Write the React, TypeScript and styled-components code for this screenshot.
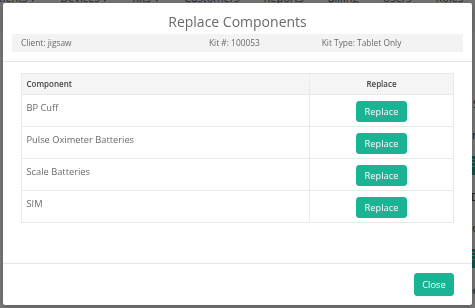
import styled, { createGlobalStyle } from 'styled-components';

const components = ['BP Cuff', 'Pulse Oximeter Batteries', 'Scale Batteries', 'SIM'];
const navItems = ['Patients ▾', 'Devices ▾', 'Kits ▾', 'Customers', 'Reports', 'Billing', 'Users', 'Roles'];
const pageRows = [
  { label: 'S', button: false },
  { label: 'n', button: false },
  { label: 'C', button: true },
  { label: 'D', button: false },
  { label: 'd', button: false },
  { label: 'U', button: true },
  { label: 'Name', button: false },
];

const GlobalStyle = createGlobalStyle`
  html, body {
    margin: 0;
    padding: 0;
    width: 475px;
    height: 308px;
    overflow: hidden;
    background: #ffffff;
    font-family: 'Open Sans', 'Liberation Sans', sans-serif;
  }
`;

function App() {
  return (
    <>
      <GlobalStyle />
      <Page>
        <Nav>
          {navItems.map((item) => (
            <NavItem key={item}>{item}</NavItem>
          ))}
        </Nav>
        <PageBody>
          {pageRows.map((row, i) => (
            <PageRow key={i}>
              {row.button ? <PageButton>Edit</PageButton> : <PageText>{row.label}</PageText>}
            </PageRow>
          ))}
        </PageBody>
      </Page>
      <Backdrop />
      <Modal>
        <Header>
          <Title>Replace Components</Title>
          <InfoBar>
            <InfoCell>Client: jigsaw</InfoCell>
            <InfoCell>Kit #: 100053</InfoCell>
            <InfoCell>Kit Type: Tablet Only</InfoCell>
          </InfoBar>
        </Header>
        <Body>
          <Table>
            <thead>
              <tr>
                <Th>Component</Th>
                <Th $center>Replace</Th>
              </tr>
            </thead>
            <tbody>
              {components.map((name) => (
                <tr key={name}>
                  <Td>{name}</Td>
                  <Td $center>
                    <GreenButton type="button">Replace</GreenButton>
                  </Td>
                </tr>
              ))}
            </tbody>
          </Table>
        </Body>
        <Footer>
          <GreenButton type="button">Close</GreenButton>
        </Footer>
      </Modal>
    </>
  );
}

export default App;

const Page = styled.div`
  width: 475px;
  height: 308px;
  overflow: hidden;
`;

const Nav = styled.div`
  display: flex;
  gap: 24px;
  margin-top: -8px;
  height: 40px;
  align-items: flex-start;
  background: #f3f3f4;
`;

const NavItem = styled.span`
  font-size: 11px;
  line-height: 11px;
  color: #555;
  white-space: nowrap;
  &:first-child {
    margin-left: -14px;
  }
`;

const PageBody = styled.div`
  display: flex;
  flex-direction: column;
  gap: 12px;
  padding-top: 62px;
`;

const PageRow = styled.div`
  display: flex;
  justify-content: flex-end;
  height: 19px;
  align-items: center;
`;

const PageText = styled.span`
  font-size: 11px;
  color: #333;
  margin-right: -4px;
`;

const PageButton = styled.span`
  background: #1ab394;
  color: #fff;
  font-size: 10px;
  height: 19px;
  width: 30px;
  margin-right: -24px;
`;

const Backdrop = styled.div`
  position: fixed;
  inset: 0;
  background: rgba(0, 0, 0, 0.52);
`;

const Modal = styled.div`
  position: fixed;
  top: 3px;
  left: 3px;
  width: 469px;
  height: 302px;
  background: #ffffff;
  border-radius: 2px;
  box-shadow: 0 2px 6px rgba(0, 0, 0, 0.3);
  display: flex;
  flex-direction: column;
  color: #676a6c;
`;

const Header = styled.div`
  padding: 9px 9px 9.5px;
  border-bottom: 1px solid #e5e5e5;
`;

const Title = styled.h4`
  margin: 0 0 3px;
  font-size: 14px;
  line-height: 19px;
  font-weight: 400;
  text-align: center;
  color: #676a6c;
`;

const InfoBar = styled.div`
  display: grid;
  grid-template-columns: 5fr 3fr 4fr;
  background: #f3f3f4;
  height: 17.5px;
  align-items: center;
`;

const InfoCell = styled.div`
  padding: 0 9px;
  font-size: 8.4px;
  line-height: 17.5px;
  white-space: nowrap;
`;

const Body = styled.div`
  flex: 1;
  padding: 11px 18px 0;
`;

const Table = styled.table`
  width: 100%;
  border-collapse: collapse;
  border: 1px solid #e7eaec;
`;

const Th = styled.th<{ $center?: boolean }>`
  background: #f5f5f6;
  font-size: 8px;
  font-weight: 600;
  line-height: 10px;
  height: 20.5px;
  box-sizing: border-box;
  padding: 5px 4.5px;
  color: #444;
  text-align: ${(p) => (p.$center ? 'center' : 'left')};
  border: 1px solid #e7eaec;
  border-top: none;
  width: ${(p) => (p.$center ? '33.33%' : '66.67%')};
`;

const Td = styled.td<{ $center?: boolean }>`
  font-size: 9.3px;
  line-height: 13px;
  height: 32px;
  box-sizing: border-box;
  padding: 5.5px 4.5px 3.5px;
  vertical-align: top;
  text-align: ${(p) => (p.$center ? 'center' : 'left')};
  border: 1px solid #e7eaec;
  color: #676a6c;
`;

const GreenButton = styled.button`
  display: inline-block;
  vertical-align: top;
  background: #1ab394;
  border: 1px solid #1ab394;
  color: #ffffff;
  font-family: 'Open Sans', 'Liberation Sans', sans-serif;
  font-size: 9.3px;
  height: 21.5px;
  line-height: 19px;
  padding: 0 7.3px;
  border-radius: 3px;
  cursor: pointer;
`;

const Footer = styled.div`
  border-top: 1px solid #e5e5e5;
  padding: 9.5px 18px;
  display: flex;
  justify-content: flex-end;

  ${GreenButton} {
    height: 22.5px;
  }
`;
